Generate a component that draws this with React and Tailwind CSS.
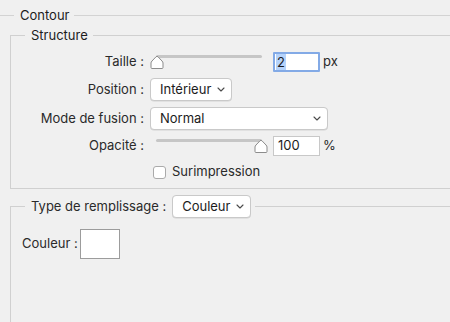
import React from "react";

const Chevron = () => (
  <svg width="8" height="5" viewBox="0 0 8 5" className="shrink-0">
    <path d="M1 1l3 3 3-3" fill="none" stroke="#4a4a4a" strokeWidth="1.1" strokeLinecap="round" strokeLinejoin="round" />
  </svg>
);

const Select = ({ value, width }) => (
  <div
    className={`flex items-center justify-between h-[23px] ${width} pl-[9px] pr-[6px] bg-white border border-[#c9c9c9] rounded-[4px] shadow-[0_0.5px_0.5px_rgba(0,0,0,0.12)] text-[13px] text-[#1c1c1c]`}
  >
    <span>{value}</span>
    <Chevron />
  </div>
);

const Thumb = ({ left }) => (
  <svg width="14" height="15" viewBox="0 0 14 15" className={`absolute top-[3px] ${left}`}>
    <path
      d="M2 13.5 Q1 13.5 1 12.5 L1 8 Q1 7 2 6 L6 1.8 Q7 0.8 8 1.8 L12 6 Q13 7 13 8 L13 12.5 Q13 13.5 12 13.5 Z"
      fill="#fff"
      stroke="#8c8c8c"
      strokeWidth="1"
    />
  </svg>
);

const Slider = ({ at }) => (
  <div className="relative w-[123px] h-[20px] shrink-0">
    <div className="absolute left-[6px] top-[3px] w-[106px] h-[2.5px] bg-[#c6c6c6] rounded-full" />
    <Thumb left={at === "start" ? "left-0" : "left-[104px]"} />
  </div>
);

const Label = ({ children }) => (
  <div className="w-[133px] shrink-0 text-right text-[13px] text-[#2a2a2a]">{children}</div>
);

export default function App() {
  return (
    <div
      className="w-[450px] h-[322px] overflow-hidden bg-[#f0f0f0] pt-[7px] text-[13px] text-[#1c1c1c]"
      style={{ fontFamily: "Inter, 'Liberation Sans', sans-serif" }}
    >
      {/* Contour */}
      <fieldset className="border-t border-[#d3d3d3]">
        <legend className="ml-[14px] pl-[6px] pr-[5px] leading-[16px]">Contour</legend>

        {/* Structure */}
        <fieldset className="mt-[4px] ml-[10px] border-t border-l border-b border-[#d0d0d0] pb-[8px]">
          <legend className="ml-[14px] pl-[6px] pr-[5px] leading-[16px]">Structure</legend>

          <div className="flex items-center h-[20px] mt-[9px] gap-[6px]">
            <Label>Taille :</Label>
            <div className="flex items-center">
              <Slider at="start" />
              <div className="flex items-center w-[47px] h-[20px] bg-white border-[2px] border-[#83aae6] rounded-[1px] pl-[1px]">
                <span className="bg-[#b5d3fb] px-[1px] leading-[16px]">2</span>
              </div>
              <span className="ml-[3px] text-[#2a2a2a]">px</span>
            </div>
          </div>

          <div className="flex items-center mt-[6px] gap-[6px]">
            <Label>Position :</Label>
            <Select value="Intérieur" width="w-[82px]" />
          </div>

          <div className="flex items-center mt-[6px] gap-[6px]">
            <Label>Mode de fusion :</Label>
            <Select value="Normal" width="w-[178px]" />
          </div>

          <div className="flex items-center h-[20px] mt-[6px] gap-[6px]">
            <Label>Opacité :</Label>
            <div className="flex items-center">
              <Slider at="end" />
              <div className="flex items-center w-[47px] h-[20px] bg-white border border-[#c8c8c8] pl-[4px]">
                100
              </div>
              <span className="ml-[3px] text-[#2a2a2a]">%</span>
            </div>
          </div>

          <div className="flex items-center h-[16px] mt-[8px] pl-[142px] gap-[6px]">
            <div className="w-[13px] h-[13px] bg-white border border-[#aaaaaa] rounded-[3px]" />
            <span className="text-[#2a2a2a]">Surimpression</span>
          </div>
        </fieldset>
      </fieldset>

      {/* Type de remplissage */}
      <fieldset className="mt-[6px] ml-[10px] border-t border-l border-[#d0d0d0] h-[140px]">
        <legend className="ml-[14px] pl-[6px] pr-[4px]">
          <div className="flex items-center gap-[6px]">
            <span className="text-[#2a2a2a]">Type de remplissage :</span>
            <Select value="Couleur" width="w-[79px]" />
          </div>
        </legend>
        <div className="flex items-center mt-[11px] ml-[11px] gap-[2px]">
          <span className="text-[#2a2a2a]">Couleur :</span>
          <div className="w-[40px] h-[30px] bg-white border border-[#9c9c9c]" />
        </div>
      </fieldset>
    </div>
  );
}
